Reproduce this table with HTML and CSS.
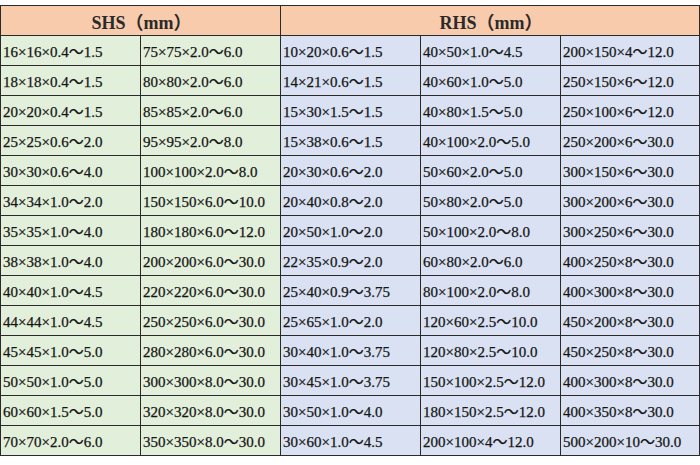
FILE: index.html
```html
<!DOCTYPE html>
<html>
<head>
<meta charset="utf-8">
<link rel="stylesheet" href="styles.css">
</head>
<body>
<table class="spec">
<colgroup><col class="c"><col class="c"><col class="c"><col class="c"><col class="c last"></colgroup>
<thead>
<tr><th colspan="2">SHS（mm）</th><th colspan="3">RHS（mm）</th></tr>
</thead>
<tbody>
<tr><td class="g">16×16×0.4～1.5</td><td class="g">75×75×2.0～6.0</td><td class="b">10×20×0.6～1.5</td><td class="b">40×50×1.0～4.5</td><td class="b">200×150×4～12.0</td></tr>
<tr><td class="g">18×18×0.4～1.5</td><td class="g">80×80×2.0～6.0</td><td class="b">14×21×0.6～1.5</td><td class="b">40×60×1.0～5.0</td><td class="b">250×150×6～12.0</td></tr>
<tr><td class="g">20×20×0.4～1.5</td><td class="g">85×85×2.0～6.0</td><td class="b">15×30×1.5～1.5</td><td class="b">40×80×1.5～5.0</td><td class="b">250×100×6～12.0</td></tr>
<tr><td class="g">25×25×0.6～2.0</td><td class="g">95×95×2.0～8.0</td><td class="b">15×38×0.6～1.5</td><td class="b">40×100×2.0～5.0</td><td class="b">250×200×6～30.0</td></tr>
<tr><td class="g">30×30×0.6～4.0</td><td class="g">100×100×2.0～8.0</td><td class="b">20×30×0.6～2.0</td><td class="b">50×60×2.0～5.0</td><td class="b">300×150×6～30.0</td></tr>
<tr><td class="g">34×34×1.0～2.0</td><td class="g">150×150×6.0～10.0</td><td class="b">20×40×0.8～2.0</td><td class="b">50×80×2.0～5.0</td><td class="b">300×200×6～30.0</td></tr>
<tr><td class="g">35×35×1.0～4.0</td><td class="g">180×180×6.0～12.0</td><td class="b">20×50×1.0～2.0</td><td class="b">50×100×2.0～8.0</td><td class="b">300×250×6～30.0</td></tr>
<tr><td class="g">38×38×1.0～4.0</td><td class="g">200×200×6.0～30.0</td><td class="b">22×35×0.9～2.0</td><td class="b">60×80×2.0～6.0</td><td class="b">400×250×8～30.0</td></tr>
<tr><td class="g">40×40×1.0～4.5</td><td class="g">220×220×6.0～30.0</td><td class="b">25×40×0.9～3.75</td><td class="b">80×100×2.0～8.0</td><td class="b">400×300×8～30.0</td></tr>
<tr><td class="g">44×44×1.0～4.5</td><td class="g">250×250×6.0～30.0</td><td class="b">25×65×1.0～2.0</td><td class="b">120×60×2.5～10.0</td><td class="b">450×200×8～30.0</td></tr>
<tr><td class="g">45×45×1.0～5.0</td><td class="g">280×280×6.0～30.0</td><td class="b">30×40×1.0～3.75</td><td class="b">120×80×2.5～10.0</td><td class="b">450×250×8～30.0</td></tr>
<tr><td class="g">50×50×1.0～5.0</td><td class="g">300×300×8.0～30.0</td><td class="b">30×45×1.0～3.75</td><td class="b">150×100×2.5～12.0</td><td class="b">400×300×8～30.0</td></tr>
<tr><td class="g">60×60×1.5～5.0</td><td class="g">320×320×8.0～30.0</td><td class="b">30×50×1.0～4.0</td><td class="b">180×150×2.5～12.0</td><td class="b">400×350×8～30.0</td></tr>
<tr><td class="g">70×70×2.0～6.0</td><td class="g">350×350×8.0～30.0</td><td class="b">30×60×1.0～4.5</td><td class="b">200×100×4～12.0</td><td class="b">500×200×10～30.0</td></tr>
</tbody>
</table>
</body>
</html>
```
FILE: styles.css
```css
html, body {
  margin: 0;
  padding: 0;
  background: #ffffff;
}
body {
  padding-top: 5px;
  font-family: "Liberation Serif", "Noto Sans CJK SC", serif;
  color: #151515;
}
.spec {
  border-collapse: collapse;
  table-layout: fixed;
  width: 699px;
}
.spec .c { width: 140px; }
.spec .last { width: 139px; }
.spec th, .spec td {
  border: 1px solid #2a2a2a;
  height: 29px;
  padding: 0 0 0 2px;
  white-space: nowrap;
  overflow: hidden;
}
.spec th {
  background: #f8cbad;
  font-size: 18px;
  font-weight: bold;
  text-align: center;
  color: #2a2a2a;
}
.spec td {
  font-size: 15px;
  text-align: left;
  -webkit-text-stroke: 0.25px #151515;
}
.spec td.g { background: #e2efda; }
.spec td.b { background: #d9e1f2; }
```
